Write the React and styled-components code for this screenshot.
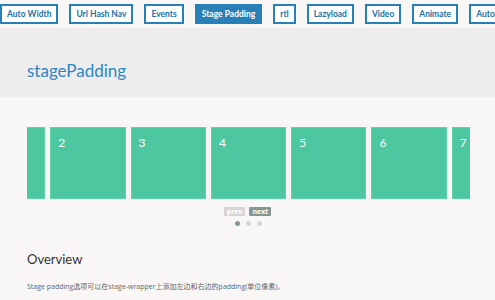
import React from 'react';
import styled, { createGlobalStyle } from 'styled-components';

const GlobalStyle = createGlobalStyle`
  html, body {
    margin: 0;
    padding: 0;
    background: #f8f7f6;
    font-family: 'Open Sans', 'Noto Sans CJK SC', sans-serif;
  }
`;

const tabs = ['Auto Width', 'Url Hash Nav', 'Events', 'Stage Padding', 'rtl', 'Lazyload', 'Video', 'Animate', 'Autoplay'];
const items = [1, 2, 3, 4, 5, 6, 7];

const App = () => {
  return (
    <React.Fragment>
      <GlobalStyle />
      <Page>
        <TopNav>
          {tabs.map((t) => (
            <Tab key={t} active={t === 'Stage Padding'}>
              {t}
            </Tab>
          ))}
        </TopNav>
        <Banner>
          <Title>stagePadding</Title>
        </Banner>
        <Content>
          <Stage>
            <Track>
              {items.map((n) => (
                <Item key={n}>{n}</Item>
              ))}
            </Track>
          </Stage>
          <Nav>
            <NavBtn>prev</NavBtn>
            <NavBtn active>next</NavBtn>
          </Nav>
          <Dots>
            <Dot active />
            <Dot />
            <Dot />
          </Dots>
          <Heading>Overview</Heading>
          <Text>Stage padding选项可以在stage-wrapper上添加左边和右边的padding(单位像素)。</Text>
        </Content>
      </Page>
    </React.Fragment>
  );
};

const Page = styled.div`
  width: 495px;
  height: 300px;
  overflow: hidden;
`;

const TopNav = styled.div`
  display: flex;
  gap: 11px;
  padding: 4px 0 0 0;
  height: 24px;
  white-space: nowrap;
  background: #f8f7f6;
`;

const Tab = styled.div`
  flex: none;
  box-sizing: border-box;
  height: 20px;
  line-height: 16px;
  padding: 0 5px;
  border: 2px solid #2980b9;
  background: ${(p) => (p.active ? '#2980b9' : '#fff')};
  color: ${(p) => (p.active ? '#fff' : '#2471a3')};
  font-size: 8.5px;
  font-weight: 700;
  font-family: Lato, sans-serif;
`;

const Banner = styled.div`
  height: 69px;
  background: #ededed;
  padding: 0 27px;
  display: flex;
  align-items: center;
`;

const Title = styled.h1`
  margin: 16px 0 0;
  font-family: Lato, sans-serif;
  font-weight: 400;
  font-size: 17px;
  color: #2f86c0;
`;

const Content = styled.div`
  padding: 30px 25px 0 27px;
`;

const Stage = styled.div`
  width: 443px;
  overflow: hidden;
`;

const Track = styled.div`
  display: flex;
  gap: 5px;
  margin-left: -57px;
`;

const Item = styled.div`
  flex: none;
  box-sizing: border-box;
  width: 75.3px;
  height: 72px;
  background: #4dc7a0;
  border: 1px solid #5fd0ac;
  color: #fff;
  font-family: Lato, sans-serif;
  font-size: 12px;
  padding: 7px 0 0 7px;
`;

const Nav = styled.div`
  display: flex;
  justify-content: center;
  gap: 4px;
  margin-top: 8px;
  padding-right: 2px;
`;

const NavBtn = styled.span`
  background: ${(p) => (p.active ? '#869791' : '#d6d6d6')};
  color: #fff;
  font-size: 7px;
  font-weight: 700;
  line-height: 9px;
  padding: 0 3px;
  border-radius: 1px;
`;

const Dots = styled.div`
  display: flex;
  justify-content: center;
  gap: 6px;
  margin-top: 5px;
`;

const Dot = styled.span`
  width: 5px;
  height: 5px;
  border-radius: 50%;
  background: ${(p) => (p.active ? '#869791' : '#d6d6d6')};
`;

const Heading = styled.h2`
  margin: 25px 0 0;
  font-family: Lato, sans-serif;
  font-weight: 400;
  font-size: 13px;
  color: #333;
`;

const Text = styled.p`
  margin: 14px 0 0;
  font-size: 7px;
  color: #666;
`;

export default App;
